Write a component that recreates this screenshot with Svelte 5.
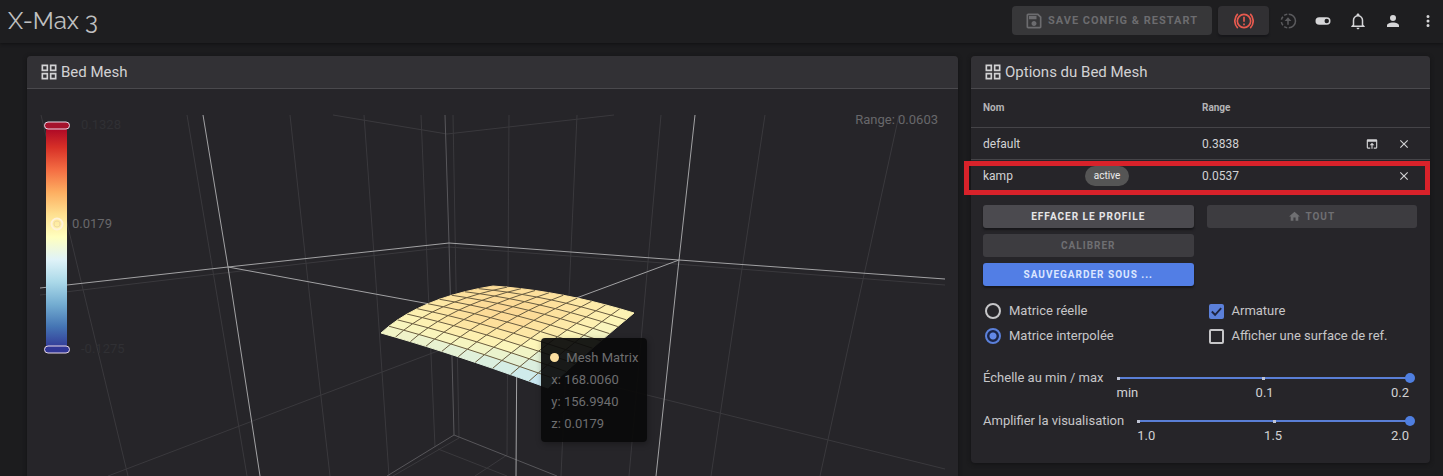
<script>
  const icons = {
    grid: "M3 11h8V3H3m2 2h4v4H5V5M13 21h8v-8h-8m2 2h4v4h-4v-4M3 21h8v-8H3m2 2h4v4H5v-4M13 3v8h8V3m-2 6h-4V5h4v4Z",
    save: "M17 3H5C3.89 3 3 3.9 3 5V19C3 20.1 3.89 21 5 21H19C20.1 21 21 20.1 21 19V7L17 3M19 19H5V5H16.17L19 7.83V19M12 12C10.34 12 9 13.34 9 15S10.34 18 12 18 15 16.66 15 15 13.66 12 12 12M6 6H15V10H6V6Z",
    toggle:
      "M17,7H7A5,5 0 0,0 2,12A5,5 0 0,0 7,17H17A5,5 0 0,0 22,12A5,5 0 0,0 17,7M17,15A3,3 0 0,1 14,12A3,3 0 0,1 17,9A3,3 0 0,1 20,12A3,3 0 0,1 17,15Z",
    bell: "M10 21H14C14 22.1 13.1 23 12 23S10 22.1 10 21M21 19V20H3V19L5 17V11C5 7.9 7.03 5.17 10 4.29C10 4.19 10 4.1 10 4C10 2.9 10.9 2 12 2S14 2.9 14 4C14 4.1 14 4.19 14 4.29C16.97 5.17 19 7.9 19 11V17L21 19M17 11C17 8.24 14.76 6 12 6S7 8.24 7 11V18H17V11Z",
    account:
      "M12,4A4,4 0 0,1 16,8A4,4 0 0,1 12,12A4,4 0 0,1 8,8A4,4 0 0,1 12,4M12,14C16.42,14 20,15.79 20,18V20H4V18C4,15.79 7.58,14 12,14Z",
    dots: "M12,16A2,2 0 0,1 14,18A2,2 0 0,1 12,20A2,2 0 0,1 10,18A2,2 0 0,1 12,16M12,10A2,2 0 0,1 14,12A2,2 0 0,1 12,14A2,2 0 0,1 10,12A2,2 0 0,1 12,10M12,4A2,2 0 0,1 14,6A2,2 0 0,1 12,8A2,2 0 0,1 10,6A2,2 0 0,1 12,4Z",
    load: "M12,10L8,14H11V20H13V14H16M19,4H5C3.89,4 3,4.9 3,6V18A2,2 0 0,0 5,20H9V18H5V8H19V18H15V20H19A2,2 0 0,0 21,18V6A2,2 0 0,0 19,4Z",
    close:
      "M19,6.41L17.59,5L12,10.59L6.41,5L5,6.41L10.59,12L5,17.59L6.41,19L12,13.41L17.59,19L19,17.59L13.41,12L19,6.41Z",
    home: "M10,20V14H14V20H19V12H22L12,3L2,12H5V20H10Z",
  };

  const profiles = [
    { name: "default", range: "0.3838", active: false },
    { name: "kamp", range: "0.0537", active: true },
  ];

  let matrix = "interpolated";
  let wireframe = true;
  let reference = false;
  let sliders = [
    {
      id: "scale",
      label: "Échelle au min / max",
      min: 0,
      max: 0.2,
      value: 0.2,
      ticks: ["min", "0.1", "0.2"],
    },
    {
      id: "boost",
      label: "Amplifier la visualisation",
      min: 1,
      max: 2,
      value: 2,
      ticks: ["1.0", "1.5", "2.0"],
    },
  ];

  const menu = [
    ["Commutateurs", icons.toggle],
    ["Notifications", icons.bell],
    ["Compte", icons.account],
    ["Menu", icons.dots],
  ];

  const gridLines = [
    "41,115 128,476",
    "187,115 247,476",
    "290,115 310,300 330,476",
    "364,115 376,283 389,476",
    "421,115 428,285 435,447",
    "453,115 456,285 459,438",
    "509,115 507,455",
    "577,115 561,476",
    "661,115 629,476",
    "765,115 711,476",
    "899,115 820,476",
    "333,115 447,134 614,115",
    "40,295 300,264 449,247 650,262 945,285",
    "108,476 300,403 451,346 647,395 945,469",
    "393,476 459,438",
    "438,449 507,476",
    "507,455 475,476",
  ];
  const edgeLines = ["445,115 449,243 454,435", "387,476 454,435 557,476"];
  const axisLines = [
    "203,115 228,267 260,476",
    "695,115 679,260 656,476",
    "40,288 228,267 449,243 679,260 945,279",
    "228,267 517,320 679,260",
    "517,320 516,476",
  ];

  // surface corners: left, back, right, front
  const A = [381, 333];
  const B = [493, 286];
  const C = [634, 313];
  const D = [548, 388];
  const steps = 10;

  const quad = (p, q, r, t) =>
    [0, 1].map(
      (i) => (1 - t) ** 2 * p[i] + 2 * t * (1 - t) * q[i] + t * t * r[i],
    );
  const blend = (a, b, c, d, u, v) =>
    (1 - u) * (1 - v) * a + (1 - u) * v * b + u * v * c + u * (1 - v) * d;

  function point(i, j) {
    const u = i / steps;
    const v = j / steps;
    const left = quad(A, [419, 298], B, v);
    const right = quad(D, [594, 346], C, v);
    const front = quad(A, [452, 353], D, u);
    const back = quad(B, [563, 291], C, u);
    return [0, 1].map(
      (k) =>
        (1 - u) * left[k] +
        u * right[k] +
        (1 - v) * front[k] +
        v * back[k] -
        blend(A[k], B[k], C[k], D[k], u, v),
    );
  }

  const ramp = [
    [200, 232, 242],
    [226, 241, 216],
    [253, 246, 184],
    [253, 226, 158],
    [251, 207, 140],
  ];
  function color(i, j) {
    const u = (i + 0.5) / steps;
    const v = (j + 0.5) / steps;
    let z =
      blend(0.38, 0.85, 0.55, -0.05, u, v) +
      0.38 * Math.sin(Math.PI * u) * Math.sin(Math.PI * v);
    z = Math.max(0, Math.min(0.999, z)) * (ramp.length - 1);
    const n = Math.floor(z);
    const c = ramp[n].map((x, k) => x + (ramp[n + 1][k] - x) * (z - n));
    return `rgb(${c.map(Math.round).join(",")})`;
  }

  const range = [...Array(steps).keys()];
  const cells = range.flatMap((i) =>
    range.map((j) => ({
      points: [
        point(i, j),
        point(i + 1, j),
        point(i + 1, j + 1),
        point(i, j + 1),
      ].join(" "),
      fill: color(i, j),
    })),
  );
  const all = [...Array(steps + 1).keys()];
  const wires = range.slice(1).flatMap((n) => [
    all.map((m) => point(n, m)).join(" "),
    all.map((m) => point(m, n)).join(" "),
  ]);

  const stops = [
    "#a50026",
    "#d73027",
    "#f46d43",
    "#fdae61",
    "#fee090",
    "#ffffbf",
    "#e0f3f8",
    "#abd9e9",
    "#74add1",
    "#4575b4",
    "#313695",
  ];
</script>

<div class="app">
  <header class="topbar">
    <h1>X-Max 3</h1>
    <button class="btn save" disabled>
      <svg viewBox="0 0 24 24"><path d={icons.save} /></svg>
      Save config &amp; restart
    </button>
    <button class="btn stop" aria-label="Arrêt d'urgence">
      <svg viewBox="0 0 24 24" class="stroke">
        <circle cx="12" cy="12" r="8" />
        <path d="M12 7v6M12 15v2M4.5 3.5a12 12 0 0 0 0 17M19.5 3.5a12 12 0 0 1 0 17" />
      </svg>
    </button>
    <nav>
      <button class="icon" aria-label="Téléversement" disabled>
        <svg viewBox="0 0 24 24" class="stroke">
          <path
            d="M13 3a9 9 0 0 1 0 18M11 3a9 9 0 0 0-4 1.6M5.2 6.2a9 9 0 0 0-2 4M3.2 13.5a9 9 0 0 0 2 4.2M7 19.4a9 9 0 0 0 4 1.6M12 17V9"
          />
          <path class="solid" d="M12 7L7.5 12h9Z" />
        </svg>
      </button>
      {#each menu as [label, path]}
        <button class="icon" aria-label={label}>
          <svg viewBox="0 0 24 24"><path d={path} /></svg>
        </button>
      {/each}
    </nav>
  </header>

  <main>
    <section class="card mesh">
      <h2>
        <svg viewBox="0 0 24 24"><path d={icons.grid} /></svg>
        Bed Mesh
      </h2>
      <div class="chart">
        <svg viewBox="40 115 905 361">
          <defs>
            <linearGradient id="heat" x1="0" y1="0" x2="0" y2="1">
              {#each stops as stop, i}
                <stop offset={i / (stops.length - 1)} stop-color={stop} />
              {/each}
            </linearGradient>
          </defs>
          {#each gridLines as points}
            <polyline class="grid-line" {points} />
          {/each}
          {#each edgeLines as points}
            <polyline class="edge-line" {points} />
          {/each}
          {#each axisLines as points}
            <polyline class="axis-line" {points} />
          {/each}
          {#each cells as cell}
            <polygon points={cell.points} fill={cell.fill} stroke={cell.fill} />
          {/each}
          {#if wireframe}
            {#each wires as points}
              <polyline class="wire" {points} />
            {/each}
          {/if}

          <rect x="46" y="125" width="21" height="224" fill="url(#heat)" />
          <rect class="handle" x="44.5" y="122" width="25" height="7" rx="3.5" fill="#a5132d" />
          <rect class="handle" x="44.5" y="346" width="25" height="7" rx="3.5" fill="#313695" />
          <circle class="ring" cx="57" cy="224" r="5.5" />
          <circle class="ring inner" cx="57" cy="224" r="3" />
          <text class="faded" x="81" y="129">0.1328</text>
          <text x="72" y="228">0.0179</text>
          <text class="faded" x="81" y="353">-0.1275</text>
          <text x="938" y="124" text-anchor="end">Range: 0.0603</text>
        </svg>
        <div class="tooltip">
          <div><i></i>Mesh Matrix</div>
          <div>x: 168.0060</div>
          <div>y: 156.9940</div>
          <div>z: 0.0179</div>
        </div>
      </div>
    </section>

    <section class="card options">
      <h2>
        <svg viewBox="0 0 24 24"><path d={icons.grid} /></svg>
        Options du Bed Mesh
      </h2>
      <table>
        <thead>
          <tr>
            <th class="name">Nom</th>
            <th class="state"></th>
            <th>Range</th>
            <th></th>
          </tr>
        </thead>
        <tbody>
          {#each profiles as profile}
            <tr class:marked={profile.active}>
              <td>{profile.name}</td>
              <td>
                {#if profile.active}<span class="chip">active</span>{/if}
              </td>
              <td>{profile.range}</td>
              <td>
                <div class="actions">
                  {#if !profile.active}
                    <button aria-label="Charger {profile.name}">
                      <svg viewBox="0 0 24 24"><path d={icons.load} /></svg>
                    </button>
                  {/if}
                  <button aria-label="Supprimer {profile.name}">
                    <svg viewBox="0 0 24 24"><path d={icons.close} /></svg>
                  </button>
                </div>
              </td>
            </tr>
          {/each}
        </tbody>
      </table>

      <div class="columns buttons">
        <div>
          <button class="btn">Effacer le profile</button>
          <button class="btn" disabled>Calibrer</button>
          <button class="btn primary">Sauvegarder sous ...</button>
        </div>
        <div>
          <button class="btn" disabled>
            <svg viewBox="0 0 24 24"><path d={icons.home} /></svg>
            Tout
          </button>
        </div>
      </div>

      <div class="columns choices">
        <div>
          <label>
            <input type="radio" name="matrix" value="probed" bind:group={matrix} />
            Matrice réelle
          </label>
          <label>
            <input type="radio" name="matrix" value="interpolated" bind:group={matrix} />
            Matrice interpolée
          </label>
        </div>
        <div>
          <label>
            <span class="check">
              <input type="checkbox" bind:checked={wireframe} />
              <svg viewBox="0 0 16 16"><path d="M3 8l3.5 3.5L13 4.5" /></svg>
            </span>
            Armature
          </label>
          <label>
            <span class="check">
              <input type="checkbox" bind:checked={reference} />
              <svg viewBox="0 0 16 16"><path d="M3 8l3.5 3.5L13 4.5" /></svg>
            </span>
            Afficher une surface de ref.
          </label>
        </div>
      </div>

      <div class="sliders">
        {#each sliders as slider}
          <div class="slider">
            <label for={slider.id}>{slider.label}</label>
            <div class="track">
              <div class="rail">
                <input
                  type="range"
                  id={slider.id}
                  min={slider.min}
                  max={slider.max}
                  step="0.1"
                  bind:value={slider.value}
                />
                <div class="ticks"><i></i><i></i><i></i></div>
              </div>
              <div class="values">
                {#each slider.ticks as tick}
                  <span>{tick}</span>
                {/each}
              </div>
            </div>
          </div>
        {/each}
      </div>
    </section>
  </main>
</div>

<style>
  :global(body) {
    background: #1c1c1e;
  }
  .app {
    display: flex;
    flex-direction: column;
    min-height: 100vh;
    color: #c6c6c8;
    font: 13px/20px Roboto, sans-serif;
  }
  svg {
    fill: currentColor;
    display: block;
    flex: none;
  }
  .stroke {
    fill: none;
    stroke: currentColor;
    stroke-width: 2;
  }
  .solid {
    fill: currentColor;
    stroke: none;
  }
  button {
    font: inherit;
    color: inherit;
    border: 0;
    padding: 0;
    background: none;
    cursor: pointer;
  }
  .topbar {
    display: flex;
    align-items: center;
    box-sizing: border-box;
    height: 43px;
    padding: 0 6px 2px 8px;
    background: #1e1e20;
    box-shadow: 0 1px 3px #111113;
  }
  h1 {
    flex: 1;
    margin: 0;
    font: 24px/30px Raleway, Lato, sans-serif;
    color: #c0c0c0;
  }
  .btn {
    display: flex;
    align-items: center;
    justify-content: center;
    height: 23px;
    border-radius: 3px;
    background: #4b4a4f;
    color: #e6e6e8;
    font-size: 10px;
    font-weight: 700;
    letter-spacing: 1px;
    text-transform: uppercase;
    box-shadow: 0 2px 2px #17171a;
  }
  .btn:disabled {
    background: #3d3c40;
    color: #6f6f72;
    box-shadow: none;
  }
  .btn svg {
    width: 13px;
    margin-right: 4px;
  }
  .topbar .btn {
    height: 29px;
    border-radius: 4px;
  }
  .topbar .save {
    padding: 0 14px 0 12px;
    font-size: 11px;
    background: #373739;
    color: #6c6c6f;
  }
  .save svg {
    width: 20px;
    margin-right: 4px;
  }
  .topbar .stop {
    width: 51px;
    margin: 0 1px 0 6px;
    background: #313033;
    color: #e85a4f;
  }
  .stop svg {
    width: 20px;
    margin: 0;
  }
  nav {
    display: flex;
    margin-right: -8px;
  }
  .icon {
    display: grid;
    place-items: center;
    width: 35px;
    height: 35px;
    color: #d6d6d8;
  }
  .icon:disabled {
    color: #5b5b5e;
  }
  .icon svg {
    width: 18px;
  }
  main {
    flex: 1;
    display: grid;
    grid-template-columns: minmax(0, 931fr) minmax(0, 459fr);
    gap: 13px;
    padding: 13px 13px 0 27px;
  }
  .card {
    background: #262529;
    border-radius: 4px;
    box-shadow: 0 1px 4px #121214;
  }
  .mesh {
    border-radius: 4px 4px 0 0;
  }
  .options {
    align-self: start;
  }
  h2 {
    display: flex;
    align-items: center;
    height: 32px;
    margin: 0;
    padding: 0 12px;
    background: #323135;
    border-bottom: 1px solid #4a494d;
    border-radius: 4px 4px 0 0;
    font-size: 15px;
    font-weight: 400;
    line-height: 30px;
    color: #d2d2d4;
  }
  h2 svg {
    width: 20px;
    margin-right: 2px;
  }
  .chart {
    position: relative;
    margin: 26px 13px 0;
  }
  .chart > svg {
    width: 100%;
    overflow: visible;
  }
  polyline {
    fill: none;
  }
  .grid-line {
    stroke: #3a393d;
  }
  .edge-line {
    stroke: #58575b;
  }
  .axis-line {
    stroke: #a2a2a4;
  }
  .wire {
    stroke: #6a5d41;
  }
  .handle {
    stroke: #e8d8e8;
  }
  .ring {
    fill: none;
    stroke: #fff2d8;
    stroke-width: 2;
  }
  .inner {
    stroke: #efd9a0;
    stroke-width: 1;
  }
  text {
    font: 13px Roboto, sans-serif;
    fill: #68686b;
  }
  .faded {
    fill: #303034;
  }
  .tooltip {
    position: absolute;
    left: 55.4%;
    top: 223px;
    padding: 9px 9px 7px 10px;
    border-radius: 4px;
    background: rgba(10, 10, 10, 0.93);
    box-shadow: 1px 2px 6px rgba(0, 0, 0, 0.3);
    color: #6e6e70;
    line-height: 22px;
    white-space: nowrap;
  }
  .tooltip i {
    display: inline-block;
    width: 9px;
    height: 9px;
    margin: 0 7px 0 -1px;
    border-radius: 50%;
    background: #fde0a0;
  }
  table {
    width: 100%;
    border-collapse: collapse;
    table-layout: fixed;
  }
  th,
  td {
    padding: 0 0 0 12px;
    text-align: left;
    height: 31px;
    font-size: 12px;
    color: #d2d2d4;
  }
  th {
    height: 38px;
    font-size: 10px;
    color: #b4b4b6;
  }
  tbody tr {
    border-top: 1px solid #454448;
  }
  .name {
    width: 90px;
  }
  .state {
    width: 105px;
  }
  .chip {
    display: block;
    width: 44px;
    border-radius: 10px;
    background: #555555;
    font-size: 10px;
    text-align: center;
    color: #ececec;
  }
  .actions {
    display: flex;
    justify-content: flex-end;
    gap: 18px;
    padding-right: 19px;
  }
  .actions svg {
    width: 14px;
  }
  .marked {
    position: relative;
  }
  .marked td:first-child::after {
    content: "";
    position: absolute;
    inset: 0 0 -4px -7px;
    border: 5px solid #d8222a;
    pointer-events: none;
  }
  .columns {
    display: grid;
    grid-template-columns: 1fr 1fr;
    gap: 13px;
    padding: 14px 13px 0 12px;
  }
  .columns > div {
    display: flex;
    flex-direction: column;
    gap: 6px;
  }
  .primary {
    background: #527ee5;
    color: #dce6ff;
  }
  .choices {
    padding-top: 15px;
  }
  .choices > div {
    gap: 5px;
  }
  .choices label {
    display: flex;
    align-items: center;
    gap: 8px;
    height: 20px;
    padding-left: 2px;
  }
  .choices input {
    appearance: none;
    box-sizing: border-box;
    width: 16px;
    height: 16px;
    margin: 0;
    border: 2px solid #c6c6c8;
    flex: none;
  }
  input[type="radio"] {
    border-radius: 50%;
  }
  .choices input[type="radio"]:checked {
    border-color: #5b80da;
    background: radial-gradient(circle, #6288e6 3px, #1b2547 4px);
  }
  .check {
    display: grid;
  }
  .check > * {
    grid-area: 1 / 1;
  }
  .choices .check input {
    width: 15px;
    height: 15px;
    border-radius: 2px;
  }
  .choices .check input:checked {
    background: #5b80da;
    border-color: #5b80da;
  }
  .check svg {
    width: 15px;
    fill: none;
    stroke: #1d2340;
    stroke-width: 2;
    visibility: hidden;
    pointer-events: none;
  }
  .check input:checked + svg {
    visibility: visible;
  }
  .sliders {
    padding: 22px 15px 9px 12px;
  }
  .slider {
    display: flex;
    gap: 9px;
    height: 43px;
  }
  .slider label {
    white-space: nowrap;
  }
  .track {
    flex: 1;
  }
  .rail {
    display: grid;
    align-items: center;
    height: 20px;
  }
  .rail > * {
    grid-area: 1 / 1;
  }
  input[type="range"] {
    appearance: none;
    width: 100%;
    height: 20px;
    margin: 0;
    background: linear-gradient(#5a7fd6, #5a7fd6) center / calc(100% - 10px) 2px
      no-repeat;
  }
  input[type="range"]::-webkit-slider-thumb {
    appearance: none;
    width: 10px;
    height: 10px;
    border-radius: 50%;
    background: #4f7fe0;
  }
  .ticks {
    display: flex;
    justify-content: space-between;
    padding: 0 4px;
    pointer-events: none;
  }
  .ticks i {
    width: 3px;
    height: 3px;
    background: #c0c4d4;
  }
  .ticks i:last-child {
    visibility: hidden;
  }
  .values {
    display: flex;
    justify-content: space-between;
    padding: 0 6px 0 4px;
    margin-top: -5px;
    color: #d2d2d4;
  }
</style>
